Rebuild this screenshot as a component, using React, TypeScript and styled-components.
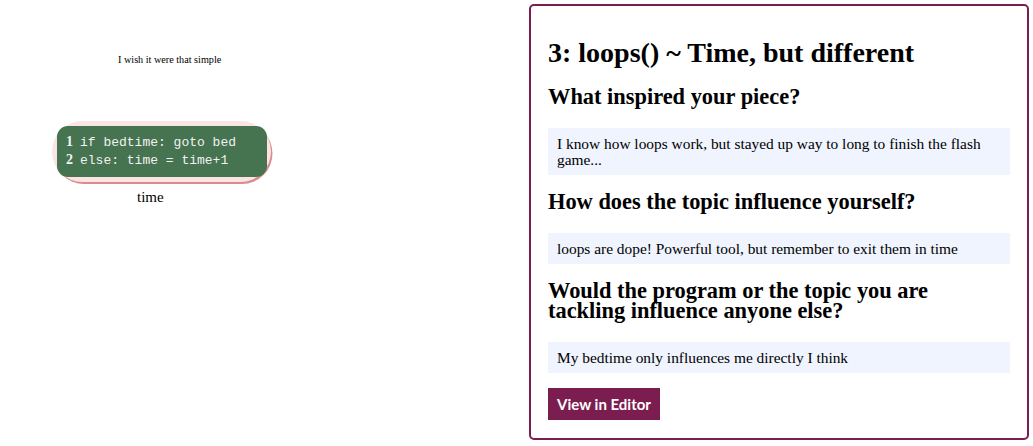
import React from "react";
import styled, { createGlobalStyle } from "styled-components";

const Global = createGlobalStyle`
  html, body { margin: 0; padding: 0; background: #ffffff; }
  body { font-family: "Liberation Serif", "DejaVu Serif", serif; color: #000; }
`;

const Page = styled.div`
  display: flex;
  align-items: flex-start;
  width: 1033px;
  height: 446px;
`;

const Stage = styled.div`
  position: relative;
  flex: 0 0 529px;
  height: 446px;
`;

const Caption = styled.div<{ $x: number; $y: number; $size: number }>`
  position: absolute;
  left: ${(p) => p.$x}px;
  top: ${(p) => p.$y}px;
  font-family: "Liberation Serif", serif;
  font-size: ${(p) => p.$size}px;
  line-height: 1;
  white-space: nowrap;
`;

const Pill = styled.div`
  position: absolute;
  left: 52px;
  top: 121px;
  width: 219px;
  height: 61px;
  box-sizing: border-box;
  padding: 5px 4px 5px 5px;
  border-radius: 32px;
  background: #fbe4e4;
  box-shadow: 1.5px 2px 0 #d98d8d;
`;

const CodeBlock = styled.div`
  height: 100%;
  box-sizing: border-box;
  border-radius: 11px;
  background: #467350;
  padding: 8px 0 0 9px;
  color: #f2f2f2;
`;

const CodeLine = styled.div`
  display: flex;
  align-items: baseline;
  height: 18px;
  font-family: "Liberation Mono", monospace;
  font-size: 13px;
  white-space: pre;
`;

const LineNo = styled.span`
  font-family: "Liberation Serif", serif;
  font-weight: bold;
  font-size: 14px;
  width: 14px;
`;

const Card = styled.section`
  margin-top: 4px;
  width: 500px;
  height: 436px;
  box-sizing: border-box;
  border: 2px solid #7b1d4f;
  border-radius: 5px;
  padding: 31px 17px 0 17px;
  display: flex;
  flex-direction: column;
  align-items: flex-start;
`;

const Title = styled.h1`
  margin: 0 0 18px;
  font-size: 28px;
  line-height: 32px;
  font-weight: bold;
`;

const Question = styled.h2`
  margin: 0;
  font-size: 22.4px;
  line-height: 20px;
  font-weight: bold;
  max-width: 420px;
`;

const Answer = styled.p`
  align-self: stretch;
  margin: 21px 0 17px;
  background: #eff4fe;
  padding: 8px 12px 7px 9px;
  font-size: 15.4px;
  line-height: 16px;
`;

const Button = styled.button`
  margin-top: -2px;
  border: none;
  background: #7b1d4f;
  color: #ffffff;
  font-family: "Lato", "Liberation Sans", sans-serif;
  font-weight: bold;
  font-size: 15px;
  height: 32px;
  width: 112px;
  padding: 0;
  cursor: pointer;
`;

export default function App() {
  return (
    <>
      <Global />
      <Page>
        <Stage>
          <Caption $x={118} $y={55} $size={10.2}>I wish it were that simple</Caption>
          <Pill>
            <CodeBlock>
              <CodeLine><LineNo>1</LineNo>if bedtime: goto bed</CodeLine>
              <CodeLine><LineNo>2</LineNo>else: time = time+1</CodeLine>
            </CodeBlock>
          </Pill>
          <Caption $x={137} $y={190} $size={15}>time</Caption>
        </Stage>
        <Card>
          <Title>3: loops() ~ Time, but different</Title>
          <Question>What inspired your piece?</Question>
          <Answer>I know how loops work, but stayed up way to long to finish the flash game...</Answer>
          <Question>How does the topic influence yourself?</Question>
          <Answer>loops are dope! Powerful tool, but remember to exit them in time</Answer>
          <Question>Would the program or the topic you are tackling influence anyone else?</Question>
          <Answer>My bedtime only influences me directly I think</Answer>
          <Button>View in Editor</Button>
        </Card>
      </Page>
    </>
  );
}
